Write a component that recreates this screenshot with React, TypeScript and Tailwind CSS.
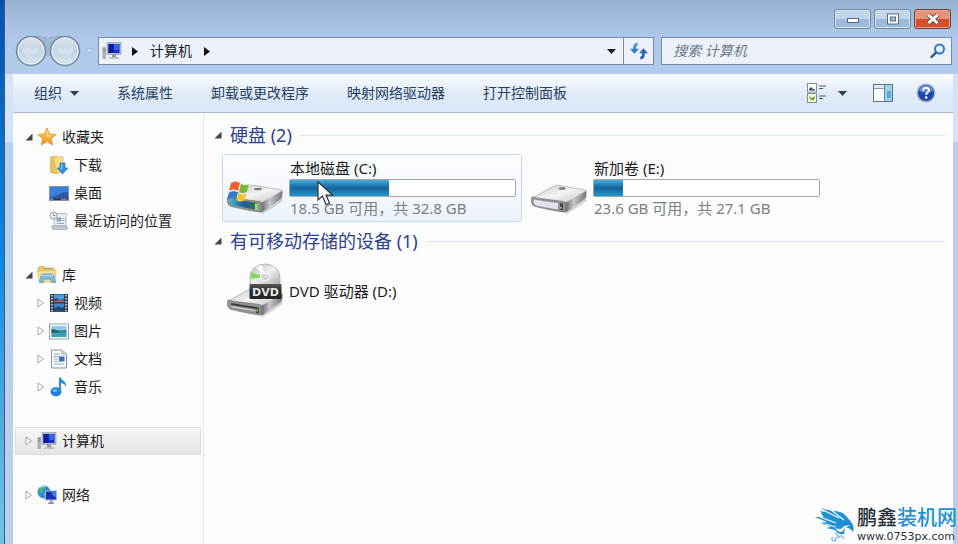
import React from 'react';

type IconProps = { className?: string };

const ComputerIcon: React.FC<IconProps> = ({ className = 'w-5 h-5' }) => (
  <svg className={className} viewBox="0 0 20 20" aria-hidden="true">
    <rect x="0.5" y="6" width="3.5" height="12" fill="#a9b3b8" />
    <path d="M1 8h2.5M1 10h2.5" stroke="#6b8a5c" strokeWidth="0.8" />
    <rect x="5" y="1.5" width="14" height="12" fill="#b9c0cb" stroke="#8d96a4" strokeWidth="0.6" />
    <rect x="6.5" y="3" width="11" height="9" fill="#1a2fc4" />
    <path d="M12 3h5.5v6H12z" fill="#2f63e8" />
    <path d="M6.5 3h5v9h-5z" fill="#0e1aa0" />
    <path d="M10 13.5h4v2.5h-4z" fill="#8f98a3" />
    <path d="M7.5 16h9l1 2h-11z" fill="#c3c3b4" />
  </svg>
);

const StarIcon = () => (
  <svg className="w-5 h-5" viewBox="0 0 20 20" aria-hidden="true">
    <defs>
      <linearGradient id="star" x1="0" y1="0" x2="0" y2="1">
        <stop offset="0" stopColor="#ffd95a" />
        <stop offset="1" stopColor="#f39019" />
      </linearGradient>
    </defs>
    <path d="M10 1l2.6 6 6.6.5-5 4.2 1.6 6.3L10 14.6 4.2 18l1.6-6.3-5-4.2 6.6-.5z" fill="url(#star)" stroke="#e58e2c" strokeWidth="0.8" />
    <path d="M10 3.5l1.8 4.7 4.5.3-6.3 2z" fill="#ffe994" opacity="0.7" />
  </svg>
);

const DownloadsIcon = () => (
  <svg className="w-5 h-5" viewBox="0 0 20 20" aria-hidden="true">
    <path d="M1.5 2l6-1v18l-6-1.5z" fill="#e9c25e" stroke="#cfa548" strokeWidth="0.6" />
    <path d="M4.5 2.5L14 1.5v15l-6 2.5z" fill="#f8dc88" stroke="#d9b455" strokeWidth="0.6" />
    <path d="M11 8h5v5h3l-5.500 6L8 13h3z" fill="#2f8ee0" stroke="#1c69b8" strokeWidth="0.6" />
    <path d="M12 9h1.5v6L10 13.5h2z" fill="#7cc2f4" />
  </svg>
);

const DesktopIcon = () => (
  <svg className="w-5 h-5" viewBox="0 0 20 20" aria-hidden="true">
    <rect x="0.5" y="3.5" width="19" height="14" fill="#2c5aa6" stroke="#7f93ad" />
    <path d="M1 4h18v5C12 8 9 14 1 14z" fill="#3d7fdc" />
    <path d="M1 15.5h18v1.5H1z" fill="#2b3b5a" />
    <path d="M1.5 15.5h2.5v1.5H1.5z" fill="#58b4d8" />
    <path d="M12 16.2h5.5" stroke="#c5cfdd" strokeWidth="0.7" />
  </svg>
);

const RecentIcon = () => (
  <svg className="w-5 h-5" viewBox="0 0 20 20" aria-hidden="true">
    <path d="M5 2.5h12c1.5 1 0 2.5 0 3.5v9H5z" fill="#e8edf1" stroke="#a3adb6" strokeWidth="0.8" />
    <path d="M3 15h14c2.5 1 2 3.5 0 3.5H5c-2 0-2.500-2-2-3.5z" fill="#c3cbd2" stroke="#929da6" strokeWidth="0.7" />
    <path d="M8 7h4v3H8zM13.5 7.5h2M13.5 9.5h2M8 12.5h7" fill="#8eb5cf" stroke="#7f97a8" strokeWidth="0.8" />
    <circle cx="4.5" cy="4.5" r="3.5" fill="#eef2f5" stroke="#98a4ae" />
    <path d="M4.5 2.5v2.2H6.5" stroke="#66727c" strokeWidth="0.8" fill="none" />
  </svg>
);

const LibraryIcon = () => (
  <svg className="w-5 h-5" viewBox="0 0 20 20" aria-hidden="true">
    <path d="M1 3l1-1.5h5L8.5 3H17v4H1z" fill="#e8c668" stroke="#cdaa50" strokeWidth="0.6" />
    <path d="M7 3.5h8" stroke="#7cba72" />
    <path d="M.5 6L19 5l-1 12H2z" fill="#f6df97" stroke="#d8b863" strokeWidth="0.7" />
    <path d="M2.5 17.5l1.5-6.5c.5-1.300 1.5-2 3-2h7c1.500 0 2.500.7 3 2l1.5 6.5h-3.500L13.500 14h-6L6 17.500z" fill="#7dbbe3" stroke="#5190bd" strokeWidth="0.7" />
    <path d="M5 11c1-1 9-1 11 0" stroke="#c6e7f8" strokeWidth="1.2" fill="none" />
  </svg>
);

const VideoIcon = () => (
  <svg className="w-5 h-5" viewBox="0 0 20 20" aria-hidden="true">
    <rect x="1" y="1" width="18" height="18" fill="#2e3f51" />
    <path d="M5 1.5h10v7.5H5z" fill="#4b9be0" />
    <path d="M5 10.5h10V18.5H5z" fill="#3e86c8" />
    <path d="M5 6l3-1 3 2 4-1v3H5z" fill="#34507a" />
    <path d="M5 8h4l2-1 4 1v1H5z" fill="#c8663f" />
    <path d="M5 15l4-1.5 3 1 3-.5v4.5H5z" fill="#28486e" />
    <path d="M3 2v17M17 2v17" stroke="#c2cfda" strokeWidth="1.8" strokeDasharray="1.5 1.5" />
  </svg>
);

const PictureIcon = () => (
  <svg className="w-5 h-5" viewBox="0 0 20 20" aria-hidden="true">
    <rect x="0.5" y="3" width="19" height="15" fill="#fafcfd" stroke="#8fa5b5" />
    <rect x="2.5" y="5" width="15" height="11" fill="#8dcbea" />
    <path d="M2.5 8c4 0 6 2.5 15 1v3h-15z" fill="#2b8598" />
    <path d="M2.5 8c3 0 5 2 8 3l-8 1.5z" fill="#24665a" />
    <path d="M2.5 12.5l15-1V16h-15z" fill="#3aa0bb" />
  </svg>
);

const DocumentIcon = () => (
  <svg className="w-5 h-5" viewBox="0 0 20 20" aria-hidden="true">
    <path d="M2.5 1H13l4.500 4v14h-15z" fill="#f7fafc" stroke="#8495a3" />
    <path d="M13 1v4h4.5" fill="#d5dee6" stroke="#8495a3" strokeWidth="0.8" />
    <path d="M5 5h6M5 7.5h5M5 10h4M5 12.5h4M5 15h10" stroke="#98aabc" />
    <rect x="10" y="7.5" width="5.5" height="5" fill="#3d6fb4" />
  </svg>
);

const MusicIcon = () => (
  <svg className="w-5 h-5" viewBox="0 0 20 20" aria-hidden="true">
    <ellipse cx="7" cy="14.8" rx="5.5" ry="4.5" fill="#1c7fdc" />
    <ellipse cx="6" cy="13.5" rx="2.5" ry="1.6" fill="#6dbdf5" />
    <path d="M10 0.5h2c.5 3.500 6.500 4 5 10-.5-3-2.500-4-5-4.500V15h-2z" fill="#2a8de4" />
  </svg>
);

const NetworkIcon = () => (
  <svg className="w-5 h-5" viewBox="0 0 20 20" aria-hidden="true">
    <circle cx="7" cy="7" r="6.5" fill="#2b8fd8" />
    <path d="M2 4c2-3 5-3.500 7-3-1 2-3 2-3 4S3 8 2 7zM7 8c3-1 5 0 5 2l-3 3c-2-1-3-3-2-5z" fill="#52b862" />
    <path d="M3 2.5C5 1 8 1 9 1.5" stroke="#c1ecf9" fill="none" />
    <rect x="8.5" y="6" width="11" height="9" fill="#1c2fb8" stroke="#aab7cf" />
    <path d="M14 6.5h5v6c-3-1-4-3-5-6z" fill="#3e7cec" />
    <path d="M13 15.5h2.5v2H17V19h-6v-1.500h2z" fill="#8995a3" />
  </svg>
);

const DriveBody = () => (
  <>
    <defs>
      <linearGradient id="drive-top" x1="0" y1="0" x2="1" y2="1">
        <stop offset="0" stopColor="#c9c9cb" />
        <stop offset="0.5" stopColor="#f3f3f4" />
        <stop offset="1" stopColor="#b9babc" />
      </linearGradient>
      <linearGradient id="drive-side" x1="0" y1="0" x2="1" y2="0">
        <stop offset="0" stopColor="#656668" />
        <stop offset="0.4" stopColor="#c4c5c7" />
        <stop offset="1" stopColor="#77787a" />
      </linearGradient>
    </defs>
    <path d="M2 43l34 11 20-13-3-6z" fill="#000" opacity="0.15" />
    <path d="M1 38l22-12c3-1 6-1 8 0l23 4c2 .5 2 2 1 3L36 44z" fill="url(#drive-top)" stroke="#a2a3a5" strokeWidth="0.7" />
    <path d="M34 43l21-12c1 3 .5 6-1 8L37 51c-2 1.500-3 1-3-1z" fill="url(#drive-side)" />
    <path d="M1 37c8 2 24 3 33 5 1 2 1 7 0 10-10-1-24-4-31-6-3-2-3-6-2-9z" fill="#929396" stroke="#727375" strokeWidth="0.7" />
  </>
);

const WindowsDriveIcon = () => (
  <svg className="w-14 h-14 shrink-0" viewBox="0 0 56 56" aria-hidden="true">
    <defs>
      <linearGradient id="drive-label" x1="0" y1="0" x2="1" y2="0">
        <stop offset="0" stopColor="#45b6d8" />
        <stop offset="0.5" stopColor="#1f5f9e" />
        <stop offset="1" stopColor="#2c7440" />
      </linearGradient>
    </defs>
    <DriveBody />
    <path d="M3 39l27 4v7L5 45c-2-1-3-4-2-6z" fill="url(#drive-label)" />
    <path d="M28 43.5l2.5.3v6.5l-2.500-.3z" fill="#91ec59" />
    <ellipse cx="31" cy="29" rx="4" ry="1.3" fill="#7f8083" />
    <path d="M4 23c3-2 6-2 9 0l-2 8c-3-2-6-2-9 0z" fill="#e8622a" />
    <path d="M14 23.500c3 2 6 2 8 0l-2 8c-3 2-6 2-8 0z" fill="#7ab83a" />
    <path d="M2 32.500c3-2 6-2 9 0l-2 7c-3-2-6-2-9 0z" fill="#3579c8" />
    <path d="M11.500 33c3 2 6 2 8 0l-2 7c-3 2-6 2-8 0z" fill="#f6c32c" />
  </svg>
);

const DriveIcon = () => (
  <svg className="w-14 h-14 shrink-0" viewBox="0 0 56 56" aria-hidden="true">
    <DriveBody />
    <path d="M3 39.500c8 1.500 16 2.500 24 3.500v6.500c-8-1-16-3-22-4-2-1-3-4-2-6z" fill="#dfe2ed" />
    <path d="M29 43l3 .5v7l-3-.5z" fill="#48494a" />
    <path d="M29 47l1.500.2v1.500L29 48.500z" fill="#a9e469" />
    <ellipse cx="31" cy="28.500" rx="3.500" ry="1.300" fill="#76777a" />
  </svg>
);

const DvdIcon = () => (
  <svg className="w-14 h-14 shrink-0" viewBox="0 0 56 56" aria-hidden="true">
    <defs>
      <linearGradient id="disc" x1="0" y1="0" x2="1" y2="1">
        <stop offset="0" stopColor="#b7babd" />
        <stop offset="0.5" stopColor="#eff0f1" />
        <stop offset="1" stopColor="#a9acae" />
      </linearGradient>
      <linearGradient id="dvd-label" x1="0" y1="0" x2="0" y2="1">
        <stop offset="0" stopColor="#58595b" />
        <stop offset="0.5" stopColor="#262728" />
      </linearGradient>
    </defs>
    <DriveBody />
    <path d="M4 40l25 4v2L4 42z" fill="#3e3f41" />
    <path d="M4 43l24 4v1L5 44.500z" fill="#d5d6d8" />
    <path d="M29 44l3 .5v6l-3-.5z" fill="#3f4a3a" />
    <path d="M29.500 46l1.500.2v2.500l-1.500-.2z" fill="#7cd847" />
    <path d="M23 22V14a15 13 0 0 1 30 0v8z" fill="url(#disc)" stroke="#9da0a3" strokeWidth="0.6" />
    <path d="M38 14L24 9l-1 7z" fill="#8bd662" />
    <path d="M38 14L29 4l6-2z" fill="#fff" />
    <ellipse cx="38" cy="14" rx="4.500" ry="3.800" fill="#d4d6d8" stroke="#fff" />
    <rect x="22.500" y="21" width="32" height="15" rx="1" fill="url(#dvd-label)" />
    <text x="38.500" y="33" textAnchor="middle" fontSize="11" fontWeight="700" fill="#e7e7e7" fontFamily="DejaVu Sans, sans-serif">DVD</text>
  </svg>
);

const RefreshIcon = () => (
  <svg className="w-[18px] h-[18px]" viewBox="0 0 20 20" fill="none" aria-hidden="true">
    <path d="M8.500 2C5 3 5 5 5 9" stroke="#3b8bdc" strokeWidth="3" />
    <path d="M0 7.500h10L5 13z" fill="#2f76cc" />
    <path d="M11.500 18c3.500-.5 3.500-3 3.500-7" stroke="#2a5fb0" strokeWidth="3" />
    <path d="M10 12.500h10L15 7z" fill="#2d66b8" />
  </svg>
);

const SearchIcon = () => (
  <svg className="w-4 h-4" viewBox="0 0 16 16" fill="none" aria-hidden="true">
    <circle cx="9.500" cy="6" r="4.500" stroke="#3279c2" strokeWidth="2" fill="#dff0fc" />
    <path d="M6 9.500L1.500 14" stroke="#27568f" strokeWidth="2.400" strokeLinecap="round" />
  </svg>
);

const ViewIcon = () => (
  <svg className="w-5 h-5" viewBox="0 0 20 20" aria-hidden="true">
    <rect x="0.5" y="0.5" width="9" height="8.500" fill="#fff" stroke="#858d9a" />
    <rect x="0.5" y="10.500" width="9" height="9" fill="#f3f8d9" stroke="#858d9a" />
    <path d="M2 6l2-2 2 2h2v1.500H2z" fill="#3c4c66" />
    <path d="M2 13l3 2 3-2-1 4H4z" fill="#5f9e34" />
    <path d="M12 3h7M12 5.500h4M12 13h7M12 15.500h4" stroke="#4e5a6c" strokeWidth="1.200" />
  </svg>
);

const PreviewPaneIcon = () => (
  <svg className="w-5 h-[18px]" viewBox="0 0 20 18" aria-hidden="true">
    <rect x="0.5" y="0.500" width="19" height="17" fill="#fff" stroke="#5e7488" />
    <path d="M1 1h18v3H1z" fill="#dce8f2" />
    <path d="M1 4.500h10" stroke="#8296a8" />
    <rect x="11.500" y="1" width="7.500" height="16" fill="#9dd2ec" />
    <path d="M11.500 1v16" stroke="#5e8aa8" />
    <path d="M14 7h4v7h-4z" fill="#5fa9d4" />
  </svg>
);

const HelpIcon = () => (
  <svg className="w-5 h-5" viewBox="0 0 20 20" aria-hidden="true">
    <circle cx="10" cy="10" r="9.500" fill="#a3afc4" />
    <circle cx="10" cy="10" r="8" fill="#1f48a8" />
    <path d="M3 8a7 6 0 0 1 14 0c-4 2-10 2-14 0z" fill="#5c86d4" />
    <path d="M7.200 7.700c0-4 5.800-3.700 5.800-.5 0 2-2.800 2.200-2.800 4.600" stroke="#fff" strokeWidth="2" fill="none" />
    <circle cx="10.200" cy="14.500" r="1.300" fill="#fff" />
  </svg>
);

const NavArrows = () => (
  <svg className="w-20 h-8" viewBox="0 0 80 32" aria-hidden="true">
    <defs>
      <linearGradient id="orb" x1="0" y1="0" x2="0" y2="1">
        <stop offset="0" stopColor="#dbe5ee" />
        <stop offset="0.5" stopColor="#c3d3e3" />
        <stop offset="1" stopColor="#d8e7f2" />
      </linearGradient>
    </defs>
    <path d="M17 1c10 0 12 2 17 2s7-2 17-2v24c-8 0-8-5-17-5s-9 5-17 5z" fill="#a0b9d7" stroke="#859fbe" strokeWidth="0.800" />
    <circle cx="17" cy="16" r="14.500" fill="url(#orb)" stroke="#78899c" strokeWidth="1.500" />
    <circle cx="51" cy="16" r="14.500" fill="url(#orb)" stroke="#78899c" strokeWidth="1.500" />
    <circle cx="17" cy="16" r="13" fill="none" stroke="#e2ecf5" />
    <circle cx="51" cy="16" r="13" fill="none" stroke="#e2ecf5" />
    <path d="M8 16l8-7v4h9v6h-9v4z" fill="#d3e0ec" />
    <path d="M60 16l-8-7v4h-9v6h9v4z" fill="#d3e0ec" />
    <path d="M72 14h7l-3.500 4z" fill="#dce8f5" stroke="#97b1d2" strokeWidth="0.800" />
  </svg>
);

const Triangle: React.FC<IconProps> = ({ className = '' }) => (
  <svg className={`w-[9px] h-[5px] ${className}`} viewBox="0 0 9 5" aria-hidden="true">
    <path d="M0 0h9L4.500 5z" fill="currentColor" />
  </svg>
);

const Chevron = () => (
  <svg className="w-[6px] h-[9px]" viewBox="0 0 6 9" aria-hidden="true">
    <path d="M0 0l6 4.500L0 9z" fill="#111" />
  </svg>
);

const Expander: React.FC<{ open?: boolean }> = ({ open }) => (
  <svg className="w-2 h-[10px] shrink-0" viewBox="0 0 8 10" aria-hidden="true">
    {open ? (
      <path d="M7.500 1.500v7H0.500z" fill="#454545" />
    ) : (
      <path d="M1 1l5.500 4L1 9z" fill="#fff" stroke="#a5a5a5" />
    )}
  </svg>
);

type TreeItem = { label: string; icon: React.ReactNode; expandable?: boolean };
type TreeGroup = TreeItem & { open?: boolean; selected?: boolean; items?: TreeItem[] };

const tree: TreeGroup[] = [
  {
    label: '收藏夹',
    icon: <StarIcon />,
    open: true,
    items: [
      { label: '下载', icon: <DownloadsIcon /> },
      { label: '桌面', icon: <DesktopIcon /> },
      { label: '最近访问的位置', icon: <RecentIcon /> },
    ],
  },
  {
    label: '库',
    icon: <LibraryIcon />,
    open: true,
    items: [
      { label: '视频', icon: <VideoIcon />, expandable: true },
      { label: '图片', icon: <PictureIcon />, expandable: true },
      { label: '文档', icon: <DocumentIcon />, expandable: true },
      { label: '音乐', icon: <MusicIcon />, expandable: true },
    ],
  },
  { label: '计算机', icon: <ComputerIcon />, selected: true },
  { label: '网络', icon: <NetworkIcon /> },
];

const drives = [
  { name: '本地磁盘 (C:)', detail: '18.5 GB 可用，共 32.8 GB', used: 44, icon: <WindowsDriveIcon />, selected: true },
  { name: '新加卷 (E:)', detail: '23.6 GB 可用，共 27.1 GB', used: 13, icon: <DriveIcon />, selected: false },
];

const commands = ['系统属性', '卸载或更改程序', '映射网络驱动器', '打开控制面板'];

const TitleBar = () => (
  <div className="flex justify-end gap-[3px] pt-[9px] pr-[7px] pb-2">
    <button aria-label="最小化" className="w-[37px] h-5 flex items-center justify-center rounded-[3px] border border-[#6f86a5] bg-linear-to-b from-[#c3d5eb] from-50% to-[#9fb9d8] to-50% shadow-[inset_0_0_0_1px_#d3e1f1]">
      <svg className="w-3 h-3" viewBox="0 0 12 12"><rect x="0.500" y="5.500" width="11" height="4" fill="#fff" stroke="#59687c" /></svg>
    </button>
    <button aria-label="最大化" className="w-[37px] h-5 flex items-center justify-center rounded-[3px] border border-[#6f86a5] bg-linear-to-b from-[#c3d5eb] from-50% to-[#9fb9d8] to-50% shadow-[inset_0_0_0_1px_#d3e1f1]">
      <svg className="w-3 h-3" viewBox="0 0 12 12"><rect x="0.500" y="1" width="11" height="10" fill="#fff" stroke="#59687c" /><rect x="3.500" y="4" width="5" height="4" fill="#a8bedb" stroke="#59687c" /></svg>
    </button>
    <button aria-label="关闭" className="w-[37px] h-5 flex items-center justify-center rounded-[3px] border border-[#7b3c35] bg-linear-to-b from-[#e3937c] from-50% to-[#d2502c] to-50% shadow-[inset_0_0_0_1px_#eba78e]">
      <svg className="w-[14px] h-3" viewBox="0 0 14 12" fill="none"><path d="M2.500 2l9 8M11.500 2l-9 8" stroke="#6b4a4a" strokeWidth="4.800" /><path d="M2.500 2l9 8M11.500 2l-9 8" stroke="#fff" strokeWidth="3" /></svg>
    </button>
  </div>
);

const AddressBar = () => (
  <div className="flex items-center pl-[9px] pr-[6px] pb-[9px]">
    <button aria-label="后退和前进" className="h-7 flex items-center"><NavArrows /></button>
    <div className="flex-1 flex h-7 ml-1 border border-[#7c8ba2] bg-[#ecf1fc] text-[#1c1c1c]">
      <div className="flex-1 flex items-center pl-[3px] pr-[7px]">
        <ComputerIcon />
        <span className="ml-[10px]"><Chevron /></span>
        <a href="#computer" className="mx-3">计算机</a>
        <Chevron />
        <button aria-label="以前的位置" className="ml-auto p-0"><Triangle /></button>
      </div>
      <button aria-label="刷新" className="w-[30px] flex items-center justify-center border-l border-[#7c8ba2]"><RefreshIcon /></button>
    </div>
    <label className="flex items-center w-[31%] h-7 ml-[7px] pl-[11px] pr-[5px] border border-[#7c8ba2] bg-[#ecf1fc]">
      <input type="search" aria-label="搜索 计算机" placeholder="搜索 计算机" className="flex-1 min-w-0 bg-transparent italic outline-none placeholder:text-[#6f7785]" />
      <SearchIcon />
    </label>
  </div>
);

const Toolbar = () => (
  <div className="flex items-center h-[39px] pl-[21px] pr-[17px] border-b border-[#a9b8cc] bg-linear-to-b from-[#fbfdff] via-[#e2ebf8] to-[#dae6f6] text-[#26405f]">
    <div className="flex gap-[38px]">
      <button className="flex items-center gap-2">组织<Triangle /></button>
      {commands.map((c) => (
        <button key={c}>{c}</button>
      ))}
    </div>
    <div className="ml-auto flex items-center">
      <button aria-label="更改您的视图" className="flex items-center gap-[11px]"><ViewIcon /><Triangle /></button>
      <button aria-label="显示预览窗格" className="ml-[26px]"><PreviewPaneIcon /></button>
      <button aria-label="获取帮助" className="ml-[23px]"><HelpIcon /></button>
    </div>
  </div>
);

const Sidebar = () => (
  <nav className="w-[191px] shrink-0 flex flex-col gap-[26px] pt-[10px] pb-8 px-[2px] border-r border-[#e0e8f2] text-[#1b1b1b]">
    {tree.map((g) => (
      <div key={g.label}>
        <a
          href="#"
          className={`flex items-center h-7 pl-[9px] border rounded-[2px] ${g.selected ? 'border-[#dcdcdc] bg-linear-to-b from-[#f8f8f8] to-[#e4e4e4]' : 'border-transparent'}`}
        >
          <Expander open={g.open} />
          <span className="ml-[4px] mr-[5px]">{g.icon}</span>
          {g.label}
        </a>
        {g.items?.map((item) => (
          <a key={item.label} href="#" className="flex items-center h-7 pl-[22px]">
            <span className="w-3">{item.expandable && <Expander />}</span>
            <span className="mr-[5px]">{item.icon}</span>
            {item.label}
          </a>
        ))}
      </div>
    ))}
  </nav>
);

const SectionHeader: React.FC<{ title: string }> = ({ title }) => (
  <div className="flex items-center h-7 pl-[10px] pr-2">
    <Expander open />
    <h2 className="mx-2 text-[18px] leading-7 text-[#2b4190]">{title}</h2>
    <div className="flex-1 border-t border-[#dde3ea]"></div>
  </div>
);

const Cursor = () => (
  <svg className="absolute left-[28px] top-[24px] w-[17px] h-[25px]" viewBox="0 0 17 25" aria-hidden="true">
    <path d="M1 1v18l4.500-4 3.500 8.500 3.500-1.500L9 14h6.500z" fill="#fff" stroke="#333" strokeWidth="1.200" />
  </svg>
);

const Logo = () => (
  <div className="absolute right-0 bottom-0 flex items-center">
    <svg className="w-[42px] h-9" viewBox="0 0 42 36" aria-hidden="true">
      <path d="M6 1c8 4 20 1 25 8l6 7c2 4 2 6 1 9-2-3-5-5-8-4l-1 6c-4 1-7-1-9-4l-9-2 5-1-10-4 6-1-12-5 9 0C6 8 7 5 5 4l5 1z" fill="#1c91d3" />
      <path d="M8 3l16 8M5 10l16 6M10 17l11 3M16 3l13 10" stroke="#fbfcfd" strokeWidth="1.200" />
      <path d="M20 21c5 2 7 1 9-2l6-1-6 4c-2 5-6 3-9-1z" fill="#fff" />
      <path d="M29 17l3-1-1 2z" fill="#16568f" />
      <path d="M20 26l5 4c-4 0-6 2-4 4M26 28l3 4M18 30c-3 2 0 4 3 4" stroke="#6cb9e4" strokeWidth="1.200" fill="none" />
    </svg>
    <div className="pr-px">
      <div className="text-[20px] leading-6 font-medium text-[#222c35] font-['Liberation_Sans','Noto_Sans_CJK_SC',sans-serif]">鹏鑫<span className="text-[#1c91d3]">装机网</span></div>
      <div className="text-[11px] leading-[14px] font-medium text-[#2b3036] font-['DejaVu_Sans',sans-serif]">www.0753px.com</div>
    </div>
  </div>
);

const App: React.FC = () => {
  return (
    <div className="relative min-h-screen flex overflow-hidden text-[14px] leading-5 font-['Noto_Sans','Noto_Sans_CJK_SC',sans-serif]">
      <div className="w-[5px] shrink-0 border-r border-[#40597c] bg-linear-to-b from-[#0850ae] via-[#0c8cdc] to-[#72c4e6]"></div>
      <div className="flex-1 flex flex-col bg-[#b4cdee]">
        <header className="bg-linear-to-b from-[#96b2d1] via-[#adc8ec] to-[#b2cbec]">
          <TitleBar />
          <AddressBar />
        </header>
        <div className="flex-1 flex flex-col pl-2 pr-[5px] bg-linear-to-b from-[#d5e3f6] from-[68px] to-[#b9d0ec] to-[68px]">
          <Toolbar />
          <div className="flex-1 flex bg-[#fcfcfd]">
            <Sidebar />
            <main className="flex-1 pt-2 text-[#1b1b1b]">
              <SectionHeader title="硬盘 (2)" />
              <div className="flex flex-wrap gap-1 pl-[18px] pt-[5px]">
                {drives.map((d) => (
                  <button
                    key={d.name}
                    className={`flex items-center w-[300px] h-[68px] pl-1 pr-[5px] gap-[6px] border rounded-[3px] text-left text-[15px] ${d.selected ? 'border-[#c3daef] bg-linear-to-b from-[#fcfdfe] to-[#edf4fd]' : 'border-transparent'}`}
                  >
                    {d.icon}
                    <span className="relative flex-1 block">
                      <span className="block pl-px leading-[22px]">{d.name}</span>
                      <span className="block h-[18px] border border-[#a5a8ab] rounded-[2px] bg-white">
                        <span
                          className="block h-full bg-linear-to-b from-[#46aede] via-[#12649c] to-[#2597cf]"
                          style={{ width: `${d.used}%` }}
                        ></span>
                      </span>
                      <span className="block pl-px leading-[22px] text-[#7b7e82]">{d.detail}</span>
                      {d.selected && <Cursor />}
                    </span>
                  </button>
                ))}
              </div>
              <div className="pt-[5px]">
                <SectionHeader title="有可移动存储的设备 (1)" />
              </div>
              <div className="pl-[18px] pt-[2px]">
                <button className="flex items-center w-[300px] h-[68px] pl-[5px] gap-[6px] text-left text-[15px]">
                  <DvdIcon />
                  DVD 驱动器 (D:)
                </button>
              </div>
            </main>
          </div>
        </div>
      </div>
      <Logo />
    </div>
  );
};

export default App;
